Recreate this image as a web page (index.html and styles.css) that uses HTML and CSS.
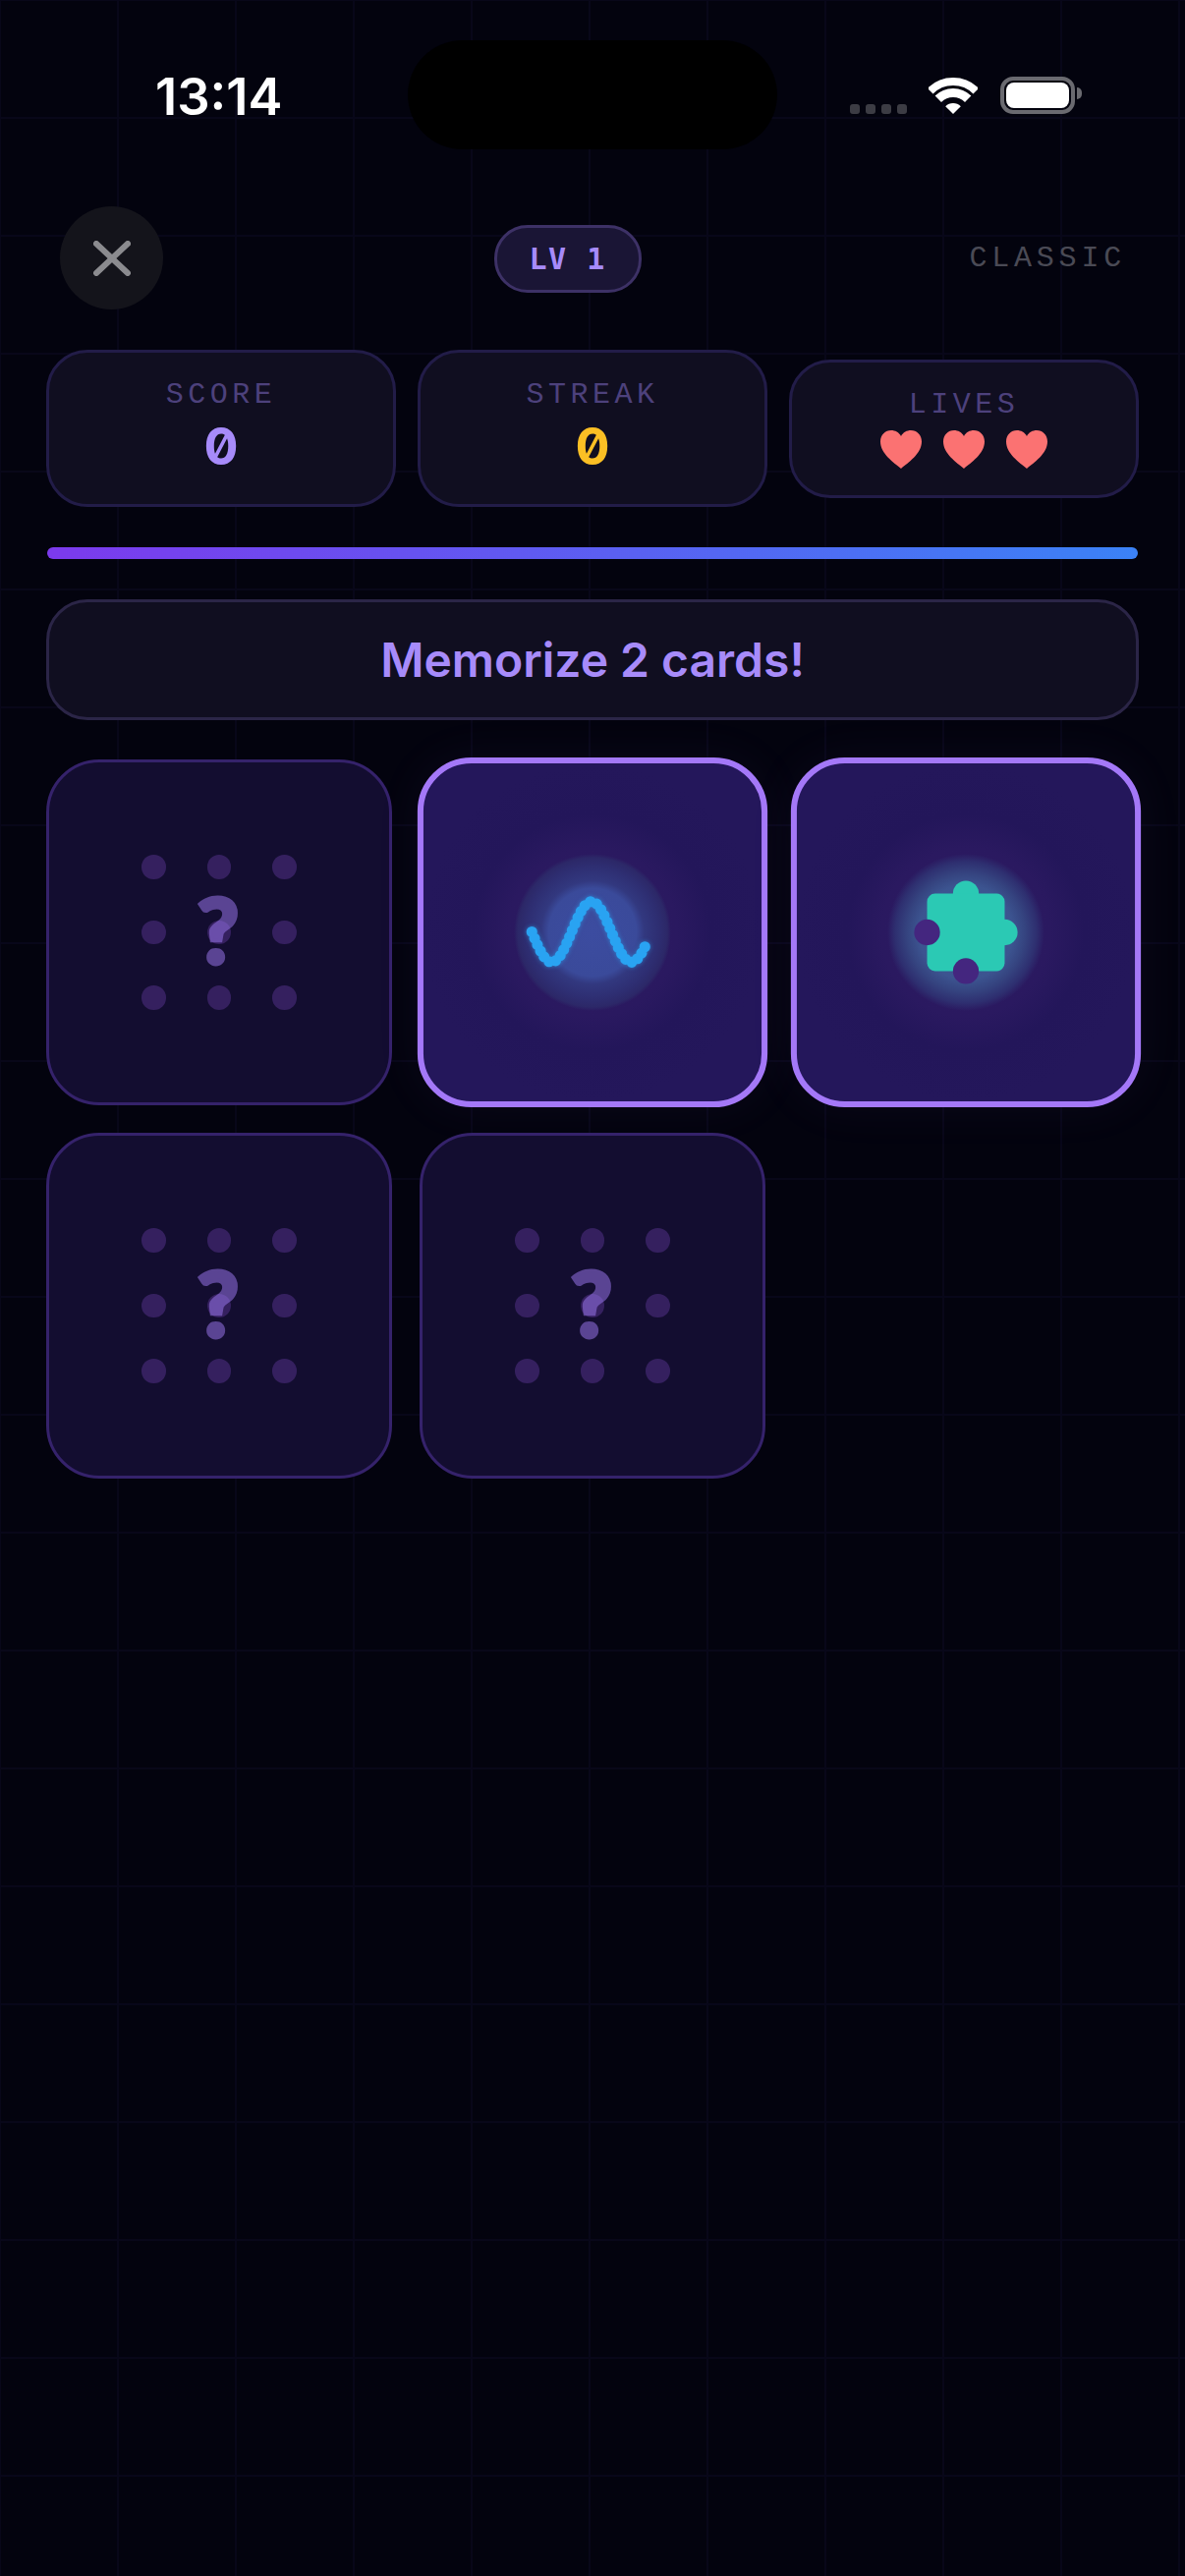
FILE: index.html
```html
<!DOCTYPE html>
<html lang="en">
<head>
    <meta charset="UTF-8">
    <meta name="viewport" content="width=device-width, initial-scale=1.0">
    <title>Memory Game</title>
    <link rel="stylesheet" href="styles.css">
</head>
<body>
    <div class="status-bar">
        <div class="status-time">13:14</div>
        <div class="island"></div>
        <div class="status-icons">
            <div class="signal"><span></span><span></span><span></span><span></span></div>
            <svg class="wifi" viewBox="0 0 50 37">
                <path d="M1.7 13.7A33 33 0 0 1 48.3 13.7" fill="none" stroke="#fff" stroke-width="8"/>
                <path d="M9.8 21.8A21.5 21.5 0 0 1 40.2 21.8" fill="none" stroke="#fff" stroke-width="9"/>
                <path d="M25 37L17.2 29.2A11 11 0 0 1 32.8 29.2Z" fill="#fff"/>
            </svg>
            <div class="battery"><div class="battery-level"></div></div>
        </div>
    </div>

    <div class="top-bar">
        <div class="close-btn">
            <svg viewBox="0 0 38 36" width="38" height="36">
                <path d="M3 3L35 33M35 3L3 33" fill="none" stroke="#8b8b8f" stroke-width="6" stroke-linecap="round"/>
            </svg>
        </div>
        <div class="level-pill">LV 1</div>
        <div class="mode">CLASSIC</div>
    </div>

    <div class="stats">
        <div class="stat">
            <div class="stat-label">SCORE</div>
            <div class="stat-value score">0</div>
        </div>
        <div class="stat">
            <div class="stat-label">STREAK</div>
            <div class="stat-value streak">0</div>
        </div>
        <div class="stat">
            <div class="stat-label">LIVES</div>
            <div class="hearts">
                <svg viewBox="0 0 42 39"><path d="M21 39C14 33 0 24 0 11.500C0 4.500 5 0 11 0C15 0 19 2 21 6C23 2 27 0 31 0C37 0 42 4.500 42 11.500C42 24 28 33 21 39Z"/></svg>
                <svg viewBox="0 0 42 39"><path d="M21 39C14 33 0 24 0 11.500C0 4.500 5 0 11 0C15 0 19 2 21 6C23 2 27 0 31 0C37 0 42 4.500 42 11.500C42 24 28 33 21 39Z"/></svg>
                <svg viewBox="0 0 42 39"><path d="M21 39C14 33 0 24 0 11.500C0 4.500 5 0 11 0C15 0 19 2 21 6C23 2 27 0 31 0C37 0 42 4.500 42 11.500C42 24 28 33 21 39Z"/></svg>
            </div>
        </div>
    </div>

    <div class="progress"></div>

    <div class="banner">Memorize 2 cards!</div>

    <div class="board">
        <div class="card">
            <div class="dots"><span></span><span></span><span></span><span></span><span></span><span></span><span></span><span></span><span></span></div>
            <div class="question">?</div>
        </div>
        <div class="card flipped">
            <div class="glow">
                <svg class="wave" viewBox="-80 -80 160 160">
                    <path d="M-61 -.5C-54.500 15.100 -48.200 30 -41 30C-26.400 30 -15.600 -31 -1 -31C13.600 -31 24.400 30 39 30C44 30 50 22 55 9" fill="none" stroke="#29a3f2" stroke-width="11" stroke-linecap="round" stroke-dasharray="0 7"/>
                </svg>
            </div>
        </div>
        <div class="card flipped">
            <div class="glow glow-teal">
                <svg class="puzzle" viewBox="-80 -80 160 160">
                    <circle cx="0" cy="-39" r="13" fill="#2bc9b4"/>
                    <circle cx="39" cy="0" r="13" fill="#2bc9b4"/>
                    <rect x="-39" y="-39" width="78" height="78" rx="8" fill="#2bc9b4"/>
                    <circle cx="-39" cy="0" r="13" fill="#44267f"/>
                    <circle cx="0" cy="39" r="13" fill="#44267f"/>
                </svg>
            </div>
        </div>
        <div class="card">
            <div class="dots"><span></span><span></span><span></span><span></span><span></span><span></span><span></span><span></span><span></span></div>
            <div class="question">?</div>
        </div>
        <div class="card">
            <div class="dots"><span></span><span></span><span></span><span></span><span></span><span></span><span></span><span></span><span></span></div>
            <div class="question">?</div>
        </div>
    </div>
</body>
</html>
```

FILE: styles.css
```css
:root {
    --purple: #a78bfa;
    --mono: 'Liberation Mono', 'DejaVu Sans Mono', monospace;
    --sans: 'Inter', 'Liberation Sans', sans-serif;
}
body {
    margin: 0;
    width: 1206px;
    height: 2622px;
    overflow: hidden;
    background-color: #03030e;
    background-image:
        linear-gradient(to right, #080719 2px, transparent 2px),
        linear-gradient(to bottom, #080719 2px, transparent 2px);
    background-size: 120px 120px;
    background-position: -1px -1px;
    font-family: var(--sans);
}

/* status bar */
.status-bar {
    display: grid;
    grid-template-columns: 415px 376px 1fr;
    height: 210px;
    box-sizing: border-box;
    padding-top: 41px;
}
.status-time {
    padding: 27px 0 0 158px;
    color: #fff;
    font-size: 52.500px;
    font-weight: 600;
    line-height: 60px;
}
.island {
    height: 111px;
    background: #000;
    border-radius: 56px;
}
.status-icons {
    display: flex;
    align-items: flex-end;
    height: 75px;
    padding-left: 74px;
}
.signal {
    display: flex;
    gap: 6px;
}
.signal span {
    width: 10px;
    height: 10px;
    background: #3c3c44;
    border-radius: 3px;
}
.wifi {
    width: 50px;
    height: 37px;
    margin-left: 22px;
}
.battery {
    position: relative;
    width: 76px;
    height: 38px;
    box-sizing: border-box;
    margin-left: 23px;
    padding: 2px;
    border: 4px solid #6a6a70;
    border-radius: 13px;
}
.battery::after {
    content: "";
    position: absolute;
    top: 7px;
    right: -11px;
    width: 5px;
    height: 12px;
    background: #6a6a70;
    border-radius: 0 5px 5px 0;
}
.battery-level {
    height: 100%;
    background: #fff;
    border-radius: 8px;
}

/* top bar */
.top-bar {
    display: flex;
    justify-content: space-between;
    align-items: center;
    height: 105px;
    padding: 0 60px 0 61px;
}
.close-btn {
    display: flex;
    justify-content: center;
    align-items: center;
    width: 105px;
    height: 105px;
    background: #14141b;
    border-radius: 50%;
}
.level-pill {
    width: 150px;
    height: 69px;
    box-sizing: border-box;
    margin: 1px 0 0 3px;
    border: 3px solid #3d3166;
    border-radius: 34px;
    background: #1a1535;
    color: var(--purple);
    font-family: 'DejaVu Sans Mono', monospace;
    font-size: 30px;
    font-weight: 700;
    line-height: 63px;
    text-align: center;
    letter-spacing: 1.500px;
}
.mode {
    color: #4a4a55;
    font-family: var(--mono);
    font-size: 30px;
    letter-spacing: 4.800px;
}

/* stats */
.stats {
    display: flex;
    align-items: center;
    gap: 22px;
    margin: 41px 47px 0;
}
.stat {
    flex: 1;
    box-sizing: border-box;
    padding: 26px 0;
    background: #100e20;
    border: 3px solid #221c48;
    border-radius: 42px;
    text-align: center;
}
.stat-label {
    color: #4d417c;
    font-family: var(--mono);
    font-size: 30px;
    line-height: 34px;
    letter-spacing: 4.500px;
}
.stat-value {
    margin-top: 4px;
    font-family: var(--sans);
    font-feature-settings: "zero";
    font-size: 52px;
    font-weight: 700;
    line-height: 64px;
}
.score { color: var(--purple); }
.streak { color: #fbbf24; }
.hearts {
    display: flex;
    justify-content: center;
    gap: 22px;
    height: 40px;
    margin-top: 9px;
}
.hearts svg {
    width: 42px;
    height: 39px;
    fill: #fb7272;
}

/* progress */
.progress {
    height: 12px;
    margin: 41px 48px 0;
    border-radius: 6px;
    background: linear-gradient(to right, #7c3aed, #3b82f6);
}

/* banner */
.banner {
    display: flex;
    justify-content: center;
    align-items: center;
    height: 123px;
    box-sizing: border-box;
    margin: 41px 47px 0;
    background: #100e20;
    border: 3px solid #2b2547;
    border-radius: 42px;
    color: var(--purple);
    font-size: 48px;
    font-weight: 600;
}

/* cards */
.board {
    display: grid;
    grid-template-columns: repeat(3, 352px);
    grid-auto-rows: 352px;
    gap: 28px;
    margin: 40px 47px 0;
}
.card {
    position: relative;
    display: flex;
    justify-content: center;
    align-items: center;
    box-sizing: border-box;
    background: #130d30;
    border: 3px solid #35226b;
    border-radius: 54px;
}
.card.flipped {
    background: radial-gradient(circle closest-side, #2f1a62 0, #2a1960 50%, #23165a 70%, #24175b 100%);
    border: 6px solid #a478f8;
    transform: scale(1.012);
    box-shadow: 0 0 50px rgba(167, 139, 250, 0.05);
}
.dots {
    display: grid;
    grid-template-columns: repeat(3, 24.500px);
    grid-auto-rows: 24.500px;
    gap: 42px;
}
.dots span {
    background: #35205f;
    border-radius: 50%;
}
.question {
    position: absolute;
    top: 0;
    left: -1px;
    width: 100%;
    height: 100%;
    opacity: 0.5;
    color: #a07cf5;
    font-family: 'Lato', 'Noto Sans', sans-serif;
    font-size: 92px;
    font-weight: 900;
    line-height: 340px;
    text-align: center;
    -webkit-text-stroke: 4px #a07cf5;
}
.glow {
    display: flex;
    justify-content: center;
    align-items: center;
    width: 158px;
    height: 158px;
    border-radius: 50%;
    background: radial-gradient(circle closest-side, #3c4ca0 0, #3a4a9a 56%, #32387f 66%, #2e2e72 84%, #2c2868 95%, rgba(44, 36, 104, 0) 100%);
}
.glow-teal {
    background: radial-gradient(circle closest-side, #3f5a94 0, #3c5490 60%, #354480 75%, #2e2f70 90%, rgba(44, 36, 104, 0) 100%);
}
.wave, .puzzle {
    flex: none;
    width: 160px;
    height: 160px;
}
.wave { filter: drop-shadow(0 0 2px rgba(41, 163, 242, 0.6)); }
.puzzle { overflow: visible; }
```
